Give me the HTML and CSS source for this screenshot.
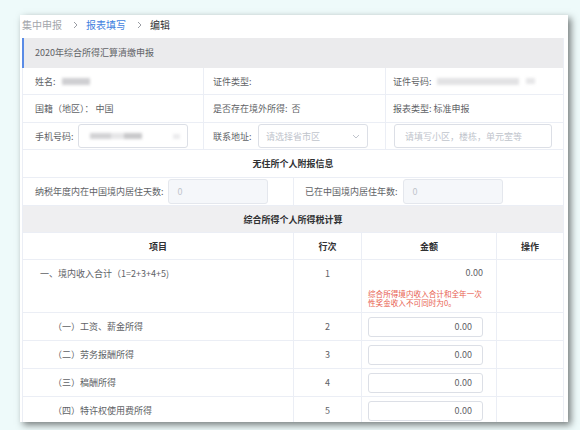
FILE: index.html
```html
<html>
    <head>
        <title>编辑</title>
        <link rel="stylesheet" href="styles.css">
    </head>
    <body>
        <div class="page">
            <div class="card">
                <div class="crumb">
                    <span class="home">集中申报</span>
                    <svg class="sep" width="5" height="8" viewBox="0 0 5 8"><polyline points="1,1 4,4 1,7" fill="none" stroke="#9a9da3" stroke-width="1"/></svg>
                    <span class="link">报表填写</span>
                    <svg class="sep" width="5" height="8" viewBox="0 0 5 8"><polyline points="1,1 4,4 1,7" fill="none" stroke="#9a9da3" stroke-width="1"/></svg>
                    <span class="cur">编辑</span>
                </div>

                <div class="main">
                    <div class="title">2020年综合所得汇算清缴申报</div>

                    <!-- 基本信息 -->
                    <div class="info">
                        <div class="cell">姓名:<span class="blur name"></span></div>
                        <div class="cell">证件类型:</div>
                        <div class="cell">证件号码:<span class="blur idno"></span><span class="blur idno2"></span></div>

                        <div class="cell tall">国籍（地区）：&nbsp;中国</div>
                        <div class="cell tall">是否存在境外所得:&nbsp;&nbsp;否</div>
                        <div class="cell tall">报表类型:&nbsp;标准申报</div>

                        <div class="cell">
                            <span class="lbl">手机号码:</span>
                            <div class="input phone"><span class="blur tel"></span><span class="blur tel2"></span></div>
                        </div>
                        <div class="cell">
                            <span class="lbl">联系地址:</span>
                            <div class="input select">
                                <span class="ph">请选择省市区</span>
                                <svg width="8" height="5" viewBox="0 0 8 5"><polyline points="1,1 4,4 7,1" fill="none" stroke="#c0c4cc" stroke-width="1"/></svg>
                            </div>
                        </div>
                        <div class="cell">
                            <div class="input addr"><span class="ph">请填写小区，楼栋，单元室等</span></div>
                        </div>
                    </div>

                    <div class="section">无住所个人附报信息</div>

                    <div class="resid">
                        <div class="rcell">
                            <span>纳税年度内在中国境内居住天数:</span>
                            <div class="input off">0</div>
                        </div>
                        <div class="rcell">
                            <span>已在中国境内居住年数:</span>
                            <div class="input off">0</div>
                        </div>
                    </div>

                    <div class="section gray">综合所得个人所得税计算</div>

                    <!-- 计算表 -->
                    <div class="tbl">
                        <div class="th">项目</div>
                        <div class="th">行次</div>
                        <div class="th">金额</div>
                        <div class="th">操作</div>

                        <div class="td item first">一、境内收入合计（1=2+3+4+5)</div>
                        <div class="td no first">1</div>
                        <div class="td amt first">
                            <div class="sum">0.00</div>
                            <div class="err">综合所得境内收入合计和全年一次性奖金收入不可同时为0。</div>
                        </div>
                        <div class="td first"></div>

                        <div class="td item sub">（一）工资、薪金所得</div>
                        <div class="td no">2</div>
                        <div class="td amt"><div class="input num">0.00</div></div>
                        <div class="td"></div>

                        <div class="td item sub">（二）劳务报酬所得</div>
                        <div class="td no">3</div>
                        <div class="td amt"><div class="input num">0.00</div></div>
                        <div class="td"></div>

                        <div class="td item sub">（三）稿酬所得</div>
                        <div class="td no">4</div>
                        <div class="td amt"><div class="input num">0.00</div></div>
                        <div class="td"></div>

                        <div class="td item sub">（四）特许权使用费所得</div>
                        <div class="td no">5</div>
                        <div class="td amt"><div class="input num">0.00</div></div>
                        <div class="td"></div>
                    </div>
                </div>
            </div>
        </div>
    </body>
</html>
```

FILE: styles.css
```css
*{
    margin: 0;
    padding: 0;
    box-sizing: border-box;
}
body{
    background: #eefafa;
    font-family: "Noto Sans CJK SC", "Noto Sans", sans-serif;
    font-size: 9px;
    color: #606266;
}
.page{
    padding: 15px 0 0 20px;
}
.card{
    width: 548px;
    height: 407px;
    background: #fff;
    box-shadow: 3px 3px 7px rgba(0, 0, 0, 0.5);
    overflow: hidden;
}

/* fil d'ariane */
.crumb{
    height: 23px;
    display: flex;
    align-items: center;
    padding: 0 0 4px 2px;
    font-size: 10px;
}
.crumb .home{ color: #a3a6ab; }
.crumb .link{ color: #3f7fe0; }
.crumb .cur{ color: #303133; }
.crumb .sep{ margin: 0 8px 0 11px; }

.main{
    margin: 0 4px 0 2px;
    border-left: 1px solid #ebeef5;
    border-right: 1px solid #ebeef5;
}
.title{
    height: 30px;
    line-height: 30px;
    margin-left: -1px;
    padding-left: 11px;
    background: #ebebed;
    border-left: 2px solid #5a8be6;
}

/* infos */
.info{
    display: grid;
    grid-template-columns: 180px 182px 1fr;
    grid-template-rows: 27px 28px 27px;
}
.cell{
    display: flex;
    align-items: center;
    padding-left: 9px;
    border-bottom: 1px solid #ebeef5;
    border-left: 1px solid #ebeef5;
}
.cell:nth-child(3n+1){
    padding-left: 12px;
    border-left: none;
}
.cell:nth-child(3n){
    padding-left: 7px;
}
.lbl{
    width: 45px;
}
.cell:nth-child(7) .lbl{
    width: 43px;
}
.input{
    height: 24px;
    border: 1px solid #dcdfe6;
    border-radius: 3px;
    background: #fff;
    display: flex;
    align-items: center;
    position: relative;
}
.input.phone{ width: 110px; }
.input.select{
    width: 110px;
    padding: 0 7px;
    justify-content: space-between;
}
.input.addr{
    width: 158px;
    margin-left: 1px;
    padding-left: 10px;
}
.ph{ color: #c0c4cc; }

.blur{
    display: inline-block;
    background: #cfcfd2;
    filter: blur(1.5px);
}
.blur.name{
    width: 28px;
    height: 7px;
    margin-left: 6px;
}
.blur.idno{
    width: 82px;
    height: 7px;
    margin-left: 5px;
    background: #e2e2e4;
}
.blur.idno2{
    width: 9px;
    height: 6px;
    margin-left: 7px;
    background: #e6e6e8;
}
.blur.tel{
    width: 52px;
    height: 6px;
    margin-left: 11px;
    background: linear-gradient(90deg, #d2d2d4 0 40%, #e6e6e8 40% 65%, #c8c8ca 65%);
}
.blur.tel2{
    width: 7px;
    height: 5px;
    margin-left: 31px;
    background: #ebebed;
}

/* titres de section */
.section{
    height: 28px;
    line-height: 27px;
    text-align: center;
    font-weight: bold;
    color: #303133;
    border-bottom: 1px solid #ebeef5;
}
.section.gray{
    height: 27px;
    background: #efeff1;
}

.resid{
    display: grid;
    grid-template-columns: 270px 1fr;
    height: 28px;
    border-bottom: 1px solid #ebeef5;
}
.rcell{
    display: flex;
    align-items: center;
    padding-left: 12px;
}
.rcell + .rcell{
    border-left: 1px solid #ebeef5;
    padding-left: 11px;
}
.rcell span{ margin-right: 4px; }
.rcell + .rcell span{ margin-right: 5px; }
.input.off{
    width: 100px;
    height: 25px;
    background: #f5f7fa;
    border-color: #e4e7ed;
    color: #c0c4cc;
    padding-left: 9px;
}

/* tableau */
.tbl{
    display: grid;
    grid-template-columns: 270px 68px 135px 1fr;
    grid-template-rows: 27px 53px;
    grid-auto-rows: 28px;
}
.th, .td{
    border-bottom: 1px solid #ebeef5;
    border-left: 1px solid #ebeef5;
    display: flex;
    align-items: center;
}
.th:nth-child(4n+1), .td:nth-child(4n+1){
    border-left: none;
}
.th{
    justify-content: center;
    font-weight: bold;
    color: #303133;
}
.td.first{
    align-items: flex-start;
    padding-top: 7px;
}
.item{ padding-left: 17px; }
.item.sub{ padding-left: 30px; }
.no{ justify-content: center; }
.amt{ padding-left: 6px; }
.amt.first{
    display: block;
    padding-right: 13px;
}
.sum{
    text-align: right;
    line-height: 12px;
}
.err{
    width: 117px;
    margin-top: 10px;
    font-size: 7.6px;
    line-height: 9px;
    color: #e8614f;
}
.input.num{
    width: 115px;
    height: 20px;
    justify-content: flex-end;
    padding-right: 10px;
}
```
